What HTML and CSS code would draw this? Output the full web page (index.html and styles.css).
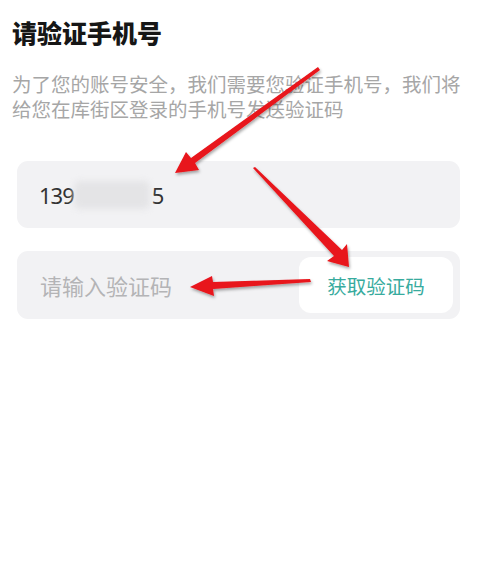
FILE: index.html
```html
<!DOCTYPE html>
<html lang="zh">
<head>
<meta charset="utf-8">
<link rel="stylesheet" href="styles.css">
</head>
<body>
<div class="page">
  <h1 class="title">请验证手机号</h1>
  <p class="desc">为了您的账号安全，我们需要您验证手机号，我们将给您在库街区登录的手机号发送验证码</p>
  <div class="field phone">
    <span class="num">139</span><span class="mask"></span><span class="num">5</span>
  </div>
  <div class="field code">
    <span class="placeholder">请输入验证码</span>
    <button class="getcode">获取验证码</button>
  </div>
  <svg class="arrows" width="489" height="572" viewBox="0 0 489 572">
    <defs>
      <filter id="sh" x="-20%" y="-20%" width="140%" height="140%">
        <feDropShadow dx="1" dy="2" stdDeviation="1.5" flood-color="#000" flood-opacity="0.35"/>
      </filter>
    </defs>
    <g fill="#e8141a" filter="url(#sh)">
      <polygon points="318,67 320,70 195,163 199,170 175,173 186,152 191,158"/>
      <polygon points="253,168 255,167 342,250 347,244 349,267 327,261 334,256"/>
      <polygon points="310,279 311,282 213,289 214,296 190,287 212,276 213,282"/>
    </g>
  </svg>
</div>
</body>
</html>
```
FILE: styles.css
```css
html, body {
  margin: 0;
  padding: 0;
  background: #ffffff;
}
body {
  font-family: "Noto Sans CJK SC", "Noto Sans", sans-serif;
  width: 489px;
  height: 572px;
  overflow: hidden;
}
.page {
  position: relative;
  width: 489px;
  height: 572px;
  padding: 15px 0 0 0;
  box-sizing: border-box;
}
.title {
  margin: 0 0 0 12px;
  font-size: 25px;
  line-height: 34px;
  font-weight: 900;
  color: #161616;
  letter-spacing: 0;
}
.desc {
  margin: 22px 20px 0 12px;
  font-size: 19.5px;
  line-height: 25px;
  color: #a6a6a6;
}
.field {
  margin: 0 29px 0 17px;
  height: 67px;
  background: #f2f2f4;
  border-radius: 11px;
  display: flex;
  align-items: center;
  box-sizing: border-box;
}
.phone {
  margin-top: 40px;
  padding-left: 22px;
}
.num {
  font-family: "Noto Sans", sans-serif;
  font-size: 22px;
  color: #333333;
  letter-spacing: -1px;
}
.mask {
  width: 76px;
  height: 28px;
  background: #e4e4e6;
  border-radius: 6px;
  margin: 0 2px 0 0;
  filter: blur(3px);
}
.code {
  margin-top: 23px;
  height: 68px;
  padding: 0 7px 0 23px;
  justify-content: space-between;
}
.placeholder {
  font-size: 22px;
  color: #b4b4b6;
}
.getcode {
  width: 154px;
  height: 56px;
  border: none;
  background: #ffffff;
  border-radius: 12px;
  font-family: "Noto Sans CJK SC", sans-serif;
  font-size: 19.5px;
  color: #38ab9e;
  padding: 0;
}
.arrows {
  position: absolute;
  left: 0;
  top: 0;
  pointer-events: none;
}
```
